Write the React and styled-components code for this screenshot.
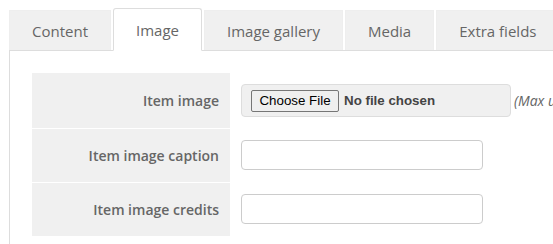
import React from 'react'
import styled, { createGlobalStyle } from 'styled-components'

const Global = createGlobalStyle`
  body {
    margin:0;
    background:#fff;
    font-family:"Open Sans", "Liberation Sans", sans-serif;
    overflow:hidden;
  }
`

const Wrapper = styled.div`
  padding:8px 0 0 9px;
  width:760px;
`

const TabBar = styled.div`
  display:flex;
  align-items:flex-end;
  gap:2px;
  border-bottom:1px solid #ddd;
  height:42px;
`

const Tab = styled.div`
  display:flex;
  align-items:center;
  padding:0 22px;
  font-size:15px;
  color:#666;
  white-space:nowrap;
  border:1px solid ${p => p.active ? '#ddd' : '#eee'};
  background:${p => p.active ? '#fff' : '#f0f0f0'};
  height:${p => p.active ? '43px' : '40px'};
  ${p => p.active ? 'border-bottom-color:#fff; margin-bottom:-1px; border-radius:3px 3px 0 0;' : 'border-bottom:none;'}
  box-sizing:border-box;
`

const Panel = styled.div`
  border-left:1px solid #ddd;
  padding:22px 0 20px 22px;
`

const Form = styled.div`
  display:grid;
  grid-template-columns:198px 1fr;
  row-gap:1px;
`

const Label = styled.div`
  background:#f0f0f0;
  display:flex;
  align-items:center;
  justify-content:flex-end;
  padding-right:11px;
  font-size:14px;
  font-weight:600;
  color:#666;
`

const Value = styled.div`
  display:flex;
  align-items:center;
  gap:3px;
  padding:${p => p.tall ? '11px' : '11px 11px 12px'};
  white-space:nowrap;
`

const FileField = styled.div`
  box-sizing:border-box;
  width:270px;
  height:33px;
  display:flex;
  align-items:center;
  gap:5px;
  padding-left:9px;
  background:#f0f0f0;
  border:1px solid #ddd;
  border-radius:4px;
`

const FileButton = styled.span`
  box-sizing:border-box;
  display:flex;
  align-items:center;
  justify-content:center;
  width:88px;
  height:22px;
  font-family:"Liberation Sans", Arial, sans-serif;
  font-size:13.33px;
  color:#000;
  background:#efefef;
  border:1px solid #767676;
  border-radius:2px;
`

const FileStatus = styled.span`
  font-family:"Liberation Sans", Arial, sans-serif;
  font-size:13.33px;
  font-weight:bold;
  color:#444;
`

const Hint = styled.span`
  font-size:14px;
  font-style:italic;
  color:#666;
`

const TextInput = styled.input`
  box-sizing:border-box;
  width:242px;
  height:30px;
  border:1px solid #ccc;
  border-radius:4px;
  background:#fff;
  outline:none;
`

export default function App () {
  return <Wrapper>
    <Global/>
    <TabBar>
      <Tab>Content</Tab>
      <Tab active>Image</Tab>
      <Tab>Image gallery</Tab>
      <Tab>Media</Tab>
      <Tab>Extra fields</Tab>
    </TabBar>
    <Panel>
      <Form>
        <Label>Item image</Label>
        <Value tall>
          <FileField>
            <FileButton>Choose File</FileButton>
            <FileStatus>No file chosen</FileStatus>
          </FileField>
          <Hint>(Max upload size: 2 MB)</Hint>
        </Value>
        <Label>Item image caption</Label>
        <Value>
          <TextInput type="text"/>
        </Value>
        <Label>Item image credits</Label>
        <Value>
          <TextInput type="text"/>
        </Value>
      </Form>
    </Panel>
  </Wrapper>
}
